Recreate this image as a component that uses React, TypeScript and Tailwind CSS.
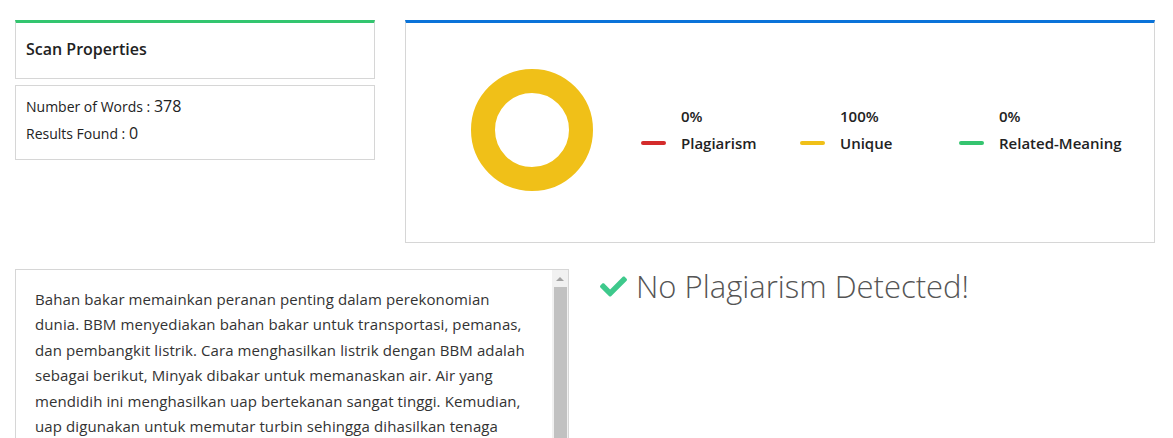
import React from "react";
import { FaCheck } from "react-icons/fa";

const legend = [
  { pct: "0%", label: "Plagiarism", color: "bg-[#d42b2b]" },
  { pct: "100%", label: "Unique", color: "bg-[#f0c018]" },
  { pct: "0%", label: "Related-Meaning", color: "bg-[#35c46f]" },
];

const lines = [
  "Bahan bakar memainkan peranan penting dalam perekonomian",
  "dunia. BBM menyediakan bahan bakar untuk transportasi, pemanas,",
  "dan pembangkit listrik. Cara menghasilkan listrik dengan BBM adalah",
  "sebagai berikut, Minyak dibakar untuk memanaskan air. Air yang",
  "mendidih ini menghasilkan uap bertekanan sangat tinggi. Kemudian,",
  "uap digunakan untuk memutar turbin sehingga dihasilkan tenaga",
  "listrik yang dapat dialirkan ke rumah-rumah dan industri.",
];

const App: React.FC = () => {
  return (
    <div className="h-[438px] w-[1173px] overflow-hidden bg-white font-['Open_Sans',sans-serif] text-[#222]">
      <div className="flex gap-[30px] px-[15px] pt-[20px]">
        {/* scan properties */}
        <div className="flex w-[360px] shrink-0 flex-col gap-[6px]">
          <div className="h-[59px] border border-t-[3px] border-[#d6d6d6] border-t-[#33c56f] px-[10px] pt-[14px]">
            <div className="text-[16px] font-semibold">Scan Properties</div>
          </div>
          <div className="h-[75px] border border-[#d6d6d6] px-[10px] pt-[7px] text-[14px] leading-[27px]">
            <div>
              Number of Words : <span className="text-[16px]">378</span>
            </div>
            <div>
              Results Found : <span className="text-[16px]">0</span>
            </div>
          </div>
        </div>

        {/* chart */}
        <div className="flex h-[223px] w-[750px] items-center border border-t-[3px] border-[#d6d6d6] border-t-[#0a73d9] pl-[64px] pb-[6px]">
          <svg width="124" height="124" viewBox="0 0 124 124">
            <circle cx="62" cy="62" r="49" fill="none" stroke="#f0c018" strokeWidth="24" />
          </svg>
          <div className="ml-[47px] flex">
            {legend.map((item) => (
              <div key={item.label} className="flex w-[159px] shrink-0 flex-col gap-[5px] whitespace-nowrap text-[15px] font-semibold">
                <div className="pl-[40px]">{item.pct}</div>
                <div className="flex items-center gap-[15px]">
                  <span className={`h-[4px] w-[25px] shrink-0 rounded-full ${item.color}`} />
                  <span>{item.label}</span>
                </div>
              </div>
            ))}
          </div>
        </div>
      </div>

      <div className="mt-[26px] flex px-[15px]">
        {/* text box */}
        <div className="flex h-[200px] w-[554px] shrink-0 border border-[#d6d6d6]">
          <div className="flex-1 pl-[19px] pt-[17px] text-[15px] leading-[25.4px] tracking-[0.1px] text-[#333]">
            {lines.map((l) => (
              <div key={l} className="whitespace-nowrap">
                {l}
              </div>
            ))}
          </div>
          <div className="flex w-[16px] flex-col items-center bg-[#f1f1f1]">
            <div className="mt-[7px] h-0 w-0 border-x-[4px] border-b-[4px] border-x-transparent border-b-[#a3a3a3]" />
            <div className="mt-[6px] h-[200px] w-[13px] bg-[#c1c1c1]" />
          </div>
        </div>

        {/* result */}
        <div className="ml-[31px] flex h-[34px] items-center gap-[9px]">
          <FaCheck className="text-[27px] text-[#3ec98c]" />
          <span className="text-[31px] font-light text-[#555]">No Plagiarism Detected!</span>
        </div>
      </div>
    </div>
  );
};

export default App;
